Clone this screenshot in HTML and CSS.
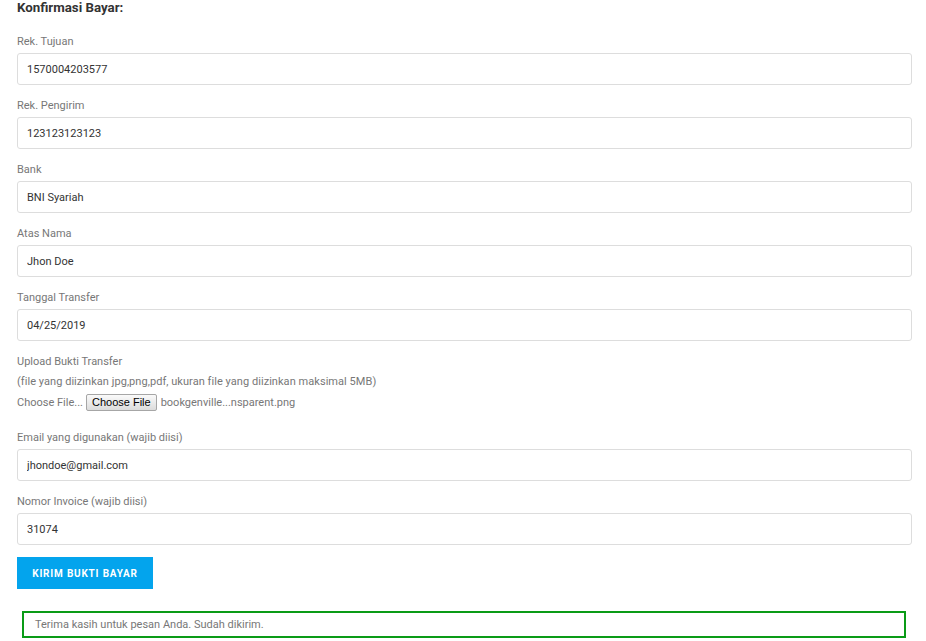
FILE: index.html
```
<!DOCTYPE html>
<html>
<head>
    <title>Konfirmasi Bayar</title>
    <link rel="stylesheet" href="styles.css">
</head>
<body>
    <div class="container">
        <h4 class="title">Konfirmasi Bayar:</h4>

        <form id="konfirmasiForm">
            <div class="form-group">
                <label>Rek. Tujuan</label>
                <input type="text" value="1570004203577">
            </div>

            <div class="form-group">
                <label>Rek. Pengirim</label>
                <input type="text" value="123123123123">
            </div>

            <div class="form-group">
                <label>Bank</label>
                <input type="text" value="BNI Syariah">
            </div>

            <div class="form-group">
                <label>Atas Nama</label>
                <input type="text" value="Jhon Doe">
            </div>

            <div class="form-group">
                <label>Tanggal Transfer</label>
                <input type="text" value="04/25/2019">
            </div>

            <div class="form-group upload-group">
                <label>Upload Bukti Transfer</label>
                <p class="note">(file yang diizinkan jpg,png,pdf, ukuran file yang diizinkan maksimal 5MB)</p>
                <div class="file-row">
                    <span class="file-label">Choose File...</span>
                    <button type="button" class="file-btn">Choose File</button>
                    <span class="file-name">bookgenville...nsparent.png</span>
                </div>
            </div>

            <div class="form-group">
                <label>Email yang digunakan (wajib diisi)</label>
                <input type="text" value="jhondoe@gmail.com">
            </div>

            <div class="form-group">
                <label>Nomor Invoice (wajib diisi)</label>
                <input type="text" value="31074">
            </div>

            <button type="submit" class="submit-btn">Kirim Bukti Bayar</button>

            <div class="response-output">Terima kasih untuk pesan Anda. Sudah dikirim.</div>
        </form>
    </div>
</body>
</html>
```

FILE: styles.css
```
body {
    margin: 0;
    font-family: Roboto, "Liberation Sans", sans-serif;
    background: #fff;
}
.container {
    width: 895px;
    padding-left: 17px;
}
.title {
    margin: 0 0 16px;
    font-size: 13.3px;
    line-height: 16px;
    font-weight: 700;
    color: #333;
}
.form-group {
    margin-bottom: 11px;
}
label {
    display: block;
    font-size: 11px;
    line-height: 20px;
    color: #777;
    margin-bottom: 1px;
}
input {
    display: block;
    box-sizing: border-box;
    width: 100%;
    height: 32px;
    padding: 0 9px;
    border: 1px solid #ddd;
    border-radius: 3px;
    font-family: Roboto, "Liberation Sans", sans-serif;
    font-size: 11px;
    color: #333;
    outline: none;
}
.upload-group {
    margin-bottom: 16px;
}
.upload-group label {
    margin-bottom: 0;
}
.note {
    margin: 0;
    font-size: 11px;
    letter-spacing: 0.05px;
    line-height: 20px;
    color: #777;
}
.file-row {
    display: flex;
    align-items: center;
    height: 20px;
    font-size: 11px;
    color: #777;
}
.file-btn {
    margin: 0 4px 0 3px;
    padding: 0 5px;
    height: 17px;
    font-family: Arial, "Liberation Sans", sans-serif;
    font-size: 11px;
    color: #000;
    background: linear-gradient(#fafafa, #dcdcdc);
    border: 1px solid #a6a6a6;
    border-radius: 2px;
}
.submit-btn {
    display: block;
    margin-top: 12px;
    width: 136px;
    height: 32px;
    padding: 0;
    background-color: #03a4ed;
    color: #fff;
    border: none;
    font-family: Roboto, "Liberation Sans", sans-serif;
    font-size: 10px;
    font-weight: 700;
    letter-spacing: 0.8px;
    text-transform: uppercase;
    cursor: pointer;
}
.response-output {
    margin: 22px 6px 0 5px;
    padding: 4px 11px;
    border: 2px solid #0a9b17;
    font-size: 11px;
    line-height: 15px;
    color: #777;
}
```
